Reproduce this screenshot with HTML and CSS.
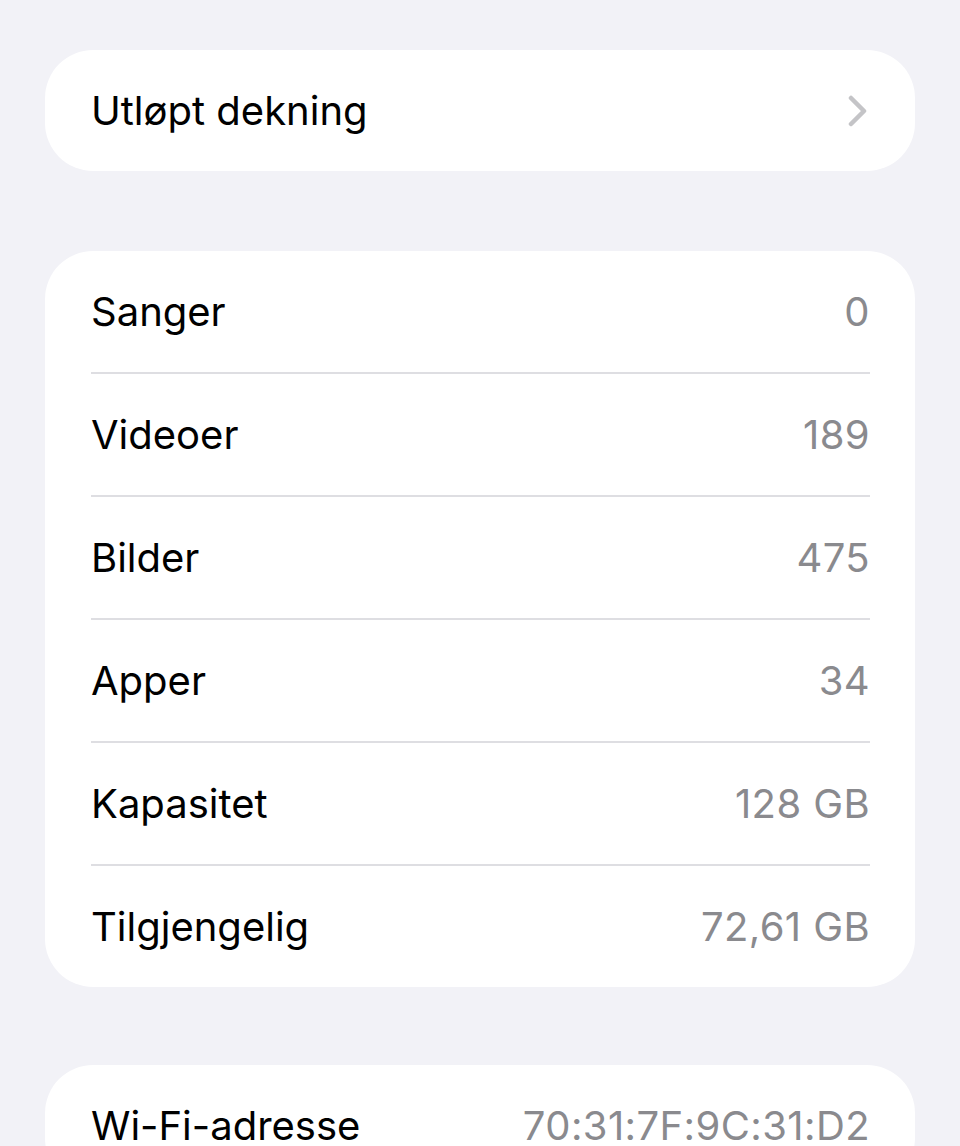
FILE: index.html
```html
<!DOCTYPE html>
<html lang="nb">
  <head>
    <meta charset="UTF-8" />
    <title>Om</title>
    <link rel="stylesheet" href="styles.css">
  </head>
  <body>
    <div class="settings">
      <div class="group">
        <a class="row" href="#">
          <span class="label">Utløpt dekning</span>
          <svg class="chevron" width="20" height="32" viewBox="0 0 20 32">
            <path d="M3 3 L16 16 L3 29" fill="none" stroke="#c4c4c7" stroke-width="4.5" stroke-linecap="round" stroke-linejoin="round"/>
          </svg>
        </a>
      </div>

      <div class="group">
        <div class="row">
          <span class="label">Sanger</span>
          <span class="value">0</span>
        </div>
        <div class="row">
          <span class="label">Videoer</span>
          <span class="value">189</span>
        </div>
        <div class="row">
          <span class="label">Bilder</span>
          <span class="value">475</span>
        </div>
        <div class="row">
          <span class="label">Apper</span>
          <span class="value">34</span>
        </div>
        <div class="row">
          <span class="label">Kapasitet</span>
          <span class="value">128 GB</span>
        </div>
        <div class="row">
          <span class="label">Tilgjengelig</span>
          <span class="value">72,61 GB</span>
        </div>
      </div>

      <div class="group last">
        <div class="row">
          <span class="label">Wi-Fi-adresse</span>
          <span class="value">70:31:7F:9C:31:D2</span>
        </div>
      </div>
    </div>
  </body>
</html>
```

FILE: styles.css
```css
html,
body {
  margin: 0;
  background: #f2f2f7;
}
body {
  font-family: Inter, "Noto Sans", "Liberation Sans", sans-serif;
  -webkit-font-smoothing: antialiased;
}
.settings {
  padding: 50px 45px 0;
  display: flex;
  flex-direction: column;
  gap: 80px;
  height: 1096px;
  overflow: hidden;
}
.group {
  background: #fff;
  border-radius: 48px;
  padding: 0 45px 0 46px;
}
.group.last {
  margin-top: -2px;
}
.row {
  height: 121px;
  display: flex;
  align-items: center;
  justify-content: space-between;
  font-size: 40px;
  text-decoration: none;
  color: #000;
}
.row + .row {
  border-top: 2px solid #dedee2;
}
.label {
  color: #000;
}
.value {
  color: #8a8a8e;
  letter-spacing: 0.4px;
}
.chevron {
  margin-right: 2px;
}
```
